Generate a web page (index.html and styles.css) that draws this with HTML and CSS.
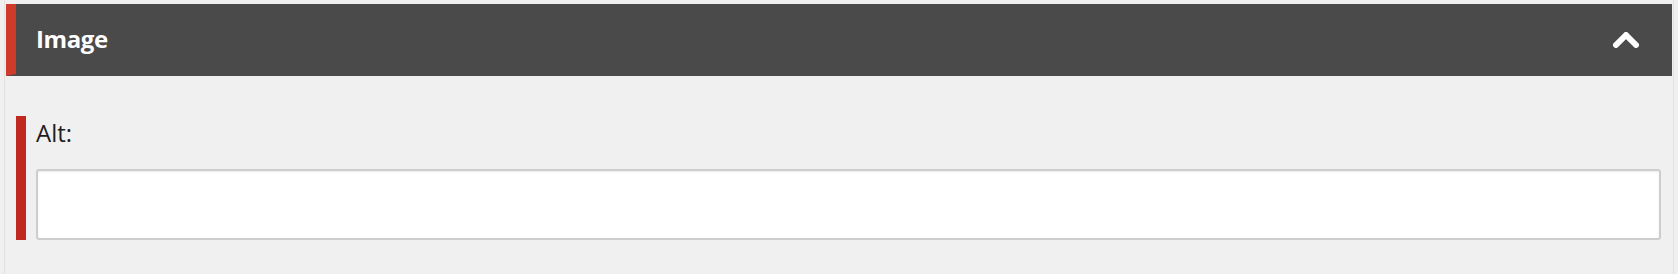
FILE: index.html
```html
<!DOCTYPE html>
<html lang="en">
<head>
<meta charset="utf-8">
<title>Image</title>
<link rel="stylesheet" href="styles.css">
</head>
<body>
<div class="frame">
  <div class="panel-head">
    <span class="panel-title">Image</span>
    <svg class="chevron" width="28" height="20" viewBox="0 0 28 20" aria-hidden="true">
      <polyline points="4,15 14,5 24,15" fill="none" stroke="#ffffff" stroke-width="6" stroke-linecap="round" stroke-linejoin="round"/>
    </svg>
  </div>
  <div class="field">
    <label class="field-label" for="alt">Alt:</label>
    <input class="field-input" id="alt" type="text">
  </div>
</div>
</body>
</html>
```
FILE: styles.css
```css
html, body {
  margin: 0;
  padding: 0;
  background: #f0f0f0;
  height: 100%;
}
body {
  font-family: "Open Sans", "Liberation Sans", sans-serif;
  overflow: hidden;
}
.frame {
  margin-left: 4px;
  width: 1670px;
  min-height: 274px;
  box-sizing: border-box;
  border-left: 1px solid #e2e2e2;
  border-right: 1px solid #e2e2e2;
  padding: 4px 1px 0 1px;
}
.panel-head {
  display: flex;
  align-items: center;
  justify-content: space-between;
  height: 70px;
  background: #4a4a4a;
  border-left: 10px solid #cf3b2b;
  border-bottom: 2px solid #4a4a4a;
  padding: 0 32px 0 20px;
}
.panel-title {
  color: #ffffff;
  font-weight: 700;
  font-size: 24px;
  line-height: 33px;
  letter-spacing: -0.4px;
  margin-top: -2px;
}
.chevron {
  display: block;
  margin-top: 2px;
  filter: blur(0.5px);
}
.field {
  margin: 40px 11px 0 10px;
  border-left: 10px solid #c0291f;
  padding-left: 10px;
  display: flex;
  flex-direction: column;
}
.field-label {
  font-size: 24px;
  line-height: 33px;
  color: #1e1e1e;
  margin-bottom: 20px;
}
.field-input {
  display: block;
  box-sizing: border-box;
  width: 100%;
  height: 71px;
  margin: 0;
  background: #ffffff;
  border: 2px solid #cdcdcd;
  border-radius: 3px;
  box-shadow: inset 0 1px 2px rgba(0, 0, 0, 0.08);
  font-family: inherit;
  font-size: 20px;
  outline: none;
}
```
